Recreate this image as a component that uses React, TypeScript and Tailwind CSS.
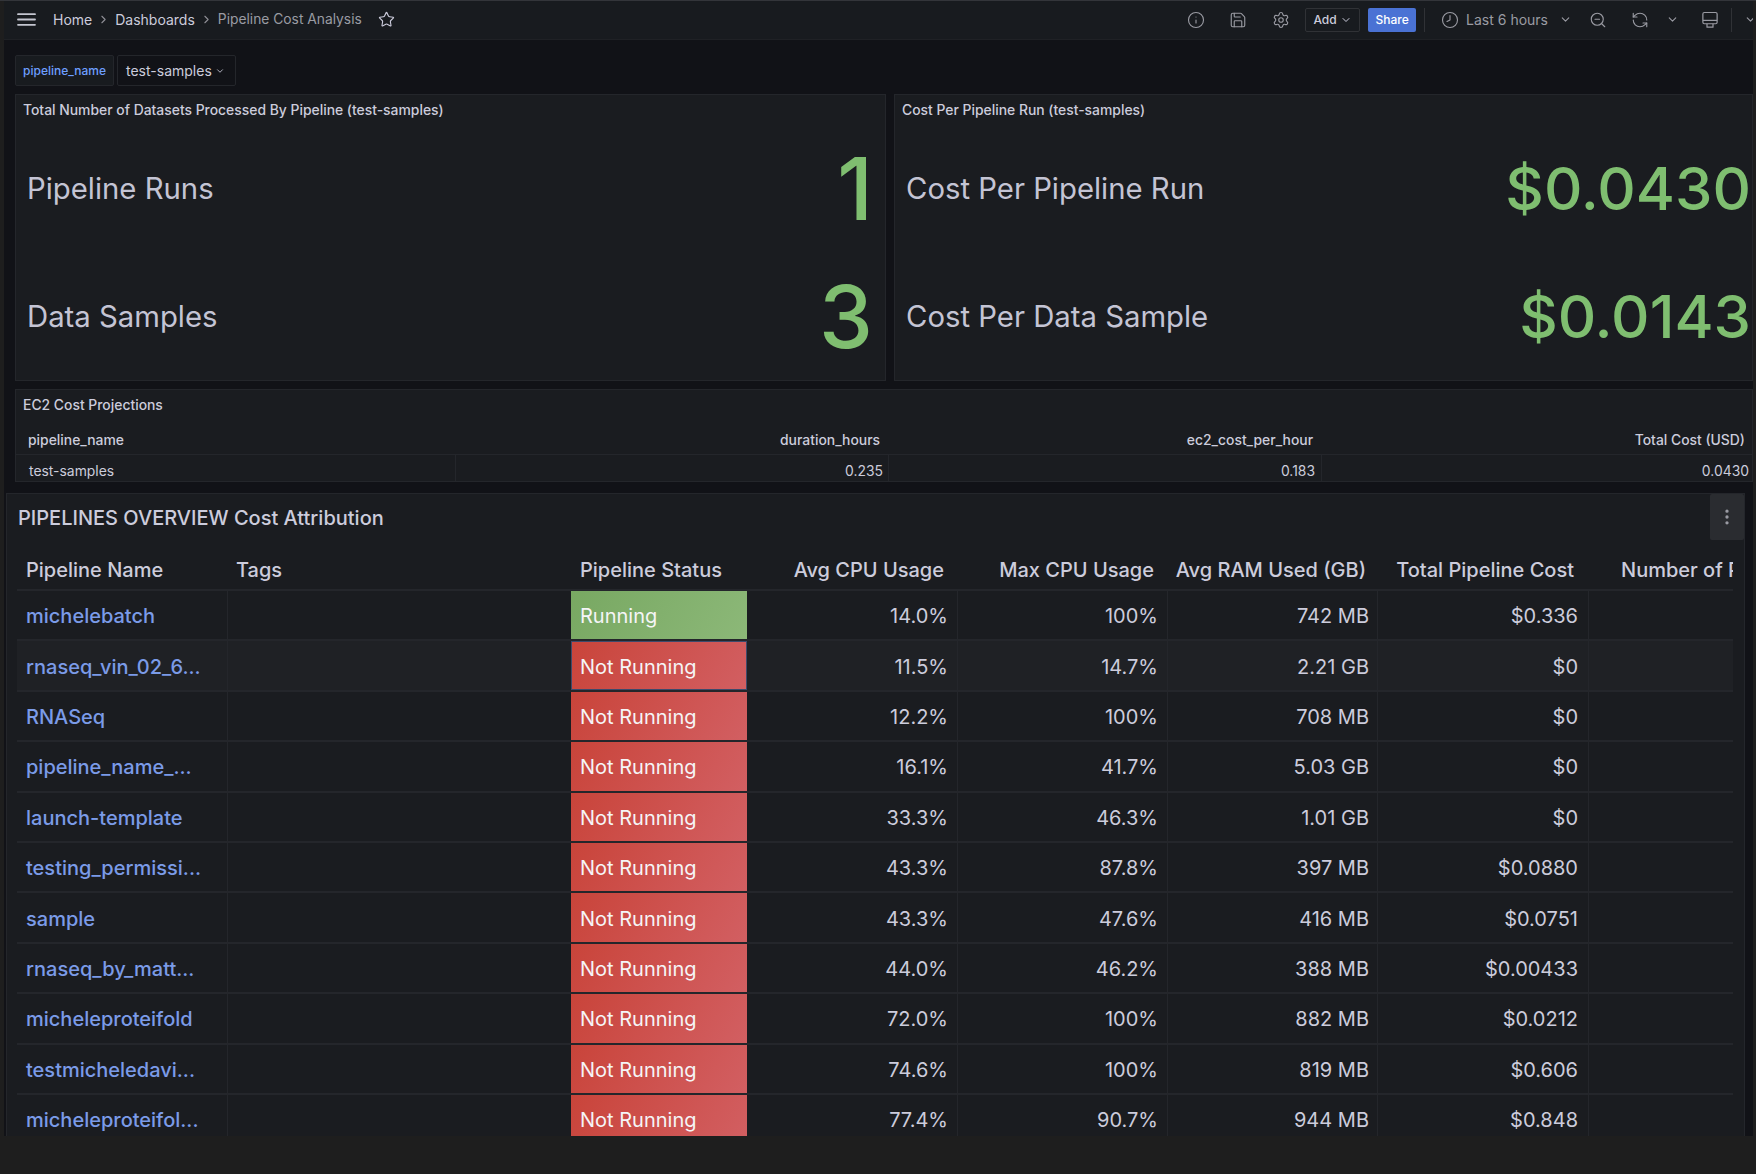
import { ChevronDown, ChevronRight, Clock8, EllipsisVertical, Info, RefreshCcw, Save, Settings, Star, ZoomOut } from "lucide-react";

const rows = [
  ["michelebatch", "Running", "14.0%", "100%", "742 MB", "$0.336"],
  ["rnaseq_vin_02_6...", "Not Running", "11.5%", "14.7%", "2.21 GB", "$0"],
  ["RNASeq", "Not Running", "12.2%", "100%", "708 MB", "$0"],
  ["pipeline_name_...", "Not Running", "16.1%", "41.7%", "5.03 GB", "$0"],
  ["launch-template", "Not Running", "33.3%", "46.3%", "1.01 GB", "$0"],
  ["testing_permissi...", "Not Running", "43.3%", "87.8%", "397 MB", "$0.0880"],
  ["sample", "Not Running", "43.3%", "47.6%", "416 MB", "$0.0751"],
  ["rnaseq_by_matt...", "Not Running", "44.0%", "46.2%", "388 MB", "$0.00433"],
  ["micheleproteifold", "Not Running", "72.0%", "100%", "882 MB", "$0.0212"],
  ["testmicheledavi...", "Not Running", "74.6%", "100%", "819 MB", "$0.606"],
  ["micheleproteifol...", "Not Running", "77.4%", "90.7%", "944 MB", "$0.848"],
];

const columns = "grid grid-cols-[211px_343px_176px_211px_210px_210px_211px_144px]";
const ec2Columns = "grid grid-cols-[437px_433px_433px_430px]";

function StatRow({ label, value, size, right }: { label: string; value: string; size: string; right: string }) {
  return (
    <div className={`flex h-[128px] items-center justify-between pl-[11px] ${right}`}>
      <span className="text-[29.3px] text-[#c4c4d4]">{label}</span>
      <span className={`${size} font-medium text-[#7fbe70]`}>{value}</span>
    </div>
  );
}

function StatPanel({ title, className, children }: { title: string; className: string; children: React.ReactNode }) {
  return (
    <div className={`${className} h-[287px] overflow-hidden border border-[#24262b] bg-[#1a1c20]`}>
      <div className="h-[30px] pl-[7px] pt-[5px] text-[13.9px] font-medium text-[#ccccdc]">{title}</div>
      {children}
    </div>
  );
}

function MonitorIcon() {
  return (
    <svg width="18" height="18" viewBox="0 0 24 24" fill="none" stroke="currentColor" strokeWidth="1.6" strokeLinejoin="round">
      <rect x="2.5" y="2" width="19" height="15" rx="2" />
      <path d="M2.5 12.5h19" />
      <path d="M8 17v4.5h8V17" />
    </svg>
  );
}

export default function App() {
  return (
    <div className="h-[1174px] w-[1756px] overflow-hidden border-t border-[#33353a] bg-[#1e1e1e] pl-[4px] pr-[3px] font-['Inter',sans-serif]">
      <div className="h-[1135px] overflow-hidden bg-[#111217]">
        <header className="flex h-[39px] items-center overflow-hidden border-b border-[#1f2125] bg-[#181b1f] pb-[1px] pl-[13px] text-[14px] text-[#ccccdc]">
          <svg width="19" height="13" viewBox="0 0 19 13" className="mr-[17px] text-[#c4c6d0]" stroke="currentColor" strokeWidth="1.8" strokeLinecap="round">
            <path d="M1 1.2h17M1 6.5h17M1 11.8h17" />
          </svg>
          <span>Home</span>
          <ChevronRight size={13} className="mx-[5px] text-[#8e8e95]" />
          <span>Dashboards</span>
          <ChevronRight size={13} className="mx-[5px] text-[#8e8e95]" />
          <span className="text-[13.8px] text-[#9a9ba3]">Pipeline Cost Analysis</span>
          <Star size={17} strokeWidth={1.6} className="ml-[16px] text-[#ccccdc]" />
          <div className="ml-auto flex items-center text-[#9a9ba3]">
            <Info size={18} strokeWidth={1.5} className="mr-[24px]" />
            <Save size={18} strokeWidth={1.5} className="mr-[25px]" />
            <Settings size={18} strokeWidth={1.5} className="mr-[15px]" />
            <div className="mr-[8px] flex h-[24px] w-[55px] items-center justify-center gap-[3px] rounded-[2px] border border-[#303236] text-[12px] font-medium text-[#ccccdc]">
              Add <ChevronDown size={12} />
            </div>
            <div className="mr-[8px] flex h-[24px] w-[48px] items-center justify-center rounded-[2px] bg-[#4a72d4] text-[12px] font-medium text-white">Share</div>
            <div className="mr-[16px] h-[24px] w-px bg-[#303236]" />
            <Clock8 size={18} strokeWidth={1.5} className="mr-[7px]" />
            <span className="mr-[11px] text-[14px]">Last 6 hours</span>
            <ChevronDown size={13} className="mr-[17px]" />
            <ZoomOut size={18} strokeWidth={1.5} className="mr-[24px]" />
            <RefreshCcw size={18} strokeWidth={1.5} className="mr-[17px]" />
            <ChevronDown size={13} className="mr-[22px]" />
            <MonitorIcon />
            <div className="ml-[12px] mr-[12px] h-[24px] w-px bg-[#303236]" />
            <ChevronDown size={13} className="-mr-[4px]" />
          </div>
        </header>

        <div className="flex h-[54px] items-center gap-[3px] pl-[11px] pt-[7px]">
          <div className="flex h-[31px] w-[99px] items-center justify-center rounded-[2px] border border-[#24262b] bg-[#181b1f] text-[12px] font-medium text-[#6e9fff]">pipeline_name</div>
          <div className="flex h-[31px] w-[119px] items-center gap-[3px] rounded-[2px] border border-[#24262b] bg-[#111217] pl-2 text-[14px] text-[#ccccdc]">
            test-samples <ChevronDown size={10} />
          </div>
        </div>

        <div className="ml-[11px] flex gap-2">
          <StatPanel title="Total Number of Datasets Processed By Pipeline (test-samples)" className="w-[871px]">
            <StatRow label="Pipeline Runs" value="1" size="text-[86px]" right="pr-[12px]" />
            <StatRow label="Data Samples" value="3" size="text-[86px]" right="pr-[12px]" />
          </StatPanel>
          <StatPanel title="Cost Per Pipeline Run (test-samples)" className="w-[859px]">
            <StatRow label="Cost Per Pipeline Run" value="$0.0430" size="text-[59.7px]" right="pr-[1px]" />
            <StatRow label="Cost Per Data Sample" value="$0.0143" size="text-[59.7px]" right="pr-[1px]" />
          </StatPanel>
        </div>

        <div className="ml-[11px] mt-2 h-[93px] w-[1738px] overflow-hidden border border-[#24262b] bg-[#1a1c20] text-[13.9px] text-[#ccccdc]">
          <div className="h-[32px] pl-[7px] pt-[5px] font-medium">EC2 Cost Projections</div>
          <div className={`${ec2Columns} h-[33px] items-end border-b border-[#24262b] pb-[3px] pl-[3px] font-medium`}>
            <span className="pl-[9px]">pipeline_name</span>
            <span className="pr-[9px] text-right">duration_hours</span>
            <span className="pr-[9px] text-right">ec2_cost_per_hour</span>
            <span className="pr-[7px] text-right">Total Cost (USD)</span>
          </div>
          <div className={`${ec2Columns} h-[30px] pl-[3px]`}>
            <span className="border-r border-[#24262b] pl-[10px] pt-[6px]">test-samples</span>
            <span className="border-r border-[#24262b] pr-[5px] pt-[6px] text-right">0.235</span>
            <span className="border-r border-[#24262b] pr-[6px] pt-[6px] text-right">0.183</span>
            <span className="pr-[3px] pt-[6px] text-right">0.0430</span>
          </div>
        </div>

        <div className="relative ml-[2px] mt-[11px] h-[660px] w-[1739px] overflow-hidden border border-[#24262b] bg-[#1a1c20] pl-[10px]">
          <div className="flex h-[51px] items-center pb-[4px] pl-[1px] text-[20px] font-medium text-[#ccccdc]">PIPELINES OVERVIEW Cost Attribution</div>
          <div className="absolute right-0 top-0 flex h-[46px] w-[34px] items-center justify-center rounded-[2px] bg-[#2a2c30] text-[#9a9ba3]">
            <EllipsisVertical size={20} />
          </div>
          <div className="w-[1716px] overflow-hidden text-[20px] text-[#ccccdc]">
            <div className={`${columns} h-[46px] items-center border-b-2 border-[#24262b] pt-[6px] font-medium`}>
              <span className="pl-[9px]">Pipeline Name</span>
              <span className="pl-[8px]">Tags</span>
              <span className="pl-[9px]">Pipeline Status</span>
              <span className="pr-[14px] text-right">Avg CPU Usage</span>
              <span className="pr-[14px] text-right">Max CPU Usage</span>
              <span className="pr-[12px] text-right">Avg RAM Used (GB)</span>
              <span className="pr-[15px] text-right">Total Pipeline Cost</span>
              <span className="overflow-hidden whitespace-nowrap pl-[32px]">Number of Pipeline Runs</span>
            </div>
            {rows.map((row, i) => {
              const running = row[1] === "Running";
              return (
                <div key={row[0]} className={`${columns} h-[50.4px] border-b-2 border-[#24262b] ${i === 1 ? "bg-[#1f2125]" : ""}`}>
                  <a className="flex items-center border-r border-[#24262b] pl-[9px] pt-[2px] font-medium text-[#7b9be8]">{row[0]}</a>
                  <span />
                  <span
                    className={`flex items-center pl-[9px] pt-[2px] text-[#f5f5f7] ${i === 1 ? "outline outline-[#3d4a6b] -outline-offset-1" : ""} ${
                      running ? "bg-[linear-gradient(120deg,#78a862,#8cb878)]" : "bg-[linear-gradient(120deg,#c9443a,#d25f62)]"
                    }`}
                  >
                    {row[1]}
                  </span>
                  <span className="flex items-center justify-end border-r border-[#24262b] pr-[9px] pt-[2px]">{row[2]}</span>
                  <span className="flex items-center justify-end border-r border-[#24262b] pr-[9px] pt-[2px]">{row[3]}</span>
                  <span className="flex items-center justify-end border-r border-[#24262b] pr-[8px] pt-[2px]">{row[4]}</span>
                  <span className="flex items-center justify-end border-r border-[#24262b] pr-[10px] pt-[2px]">{row[5]}</span>
                  <span />
                </div>
              );
            })}
          </div>
        </div>
      </div>
    </div>
  );
}
